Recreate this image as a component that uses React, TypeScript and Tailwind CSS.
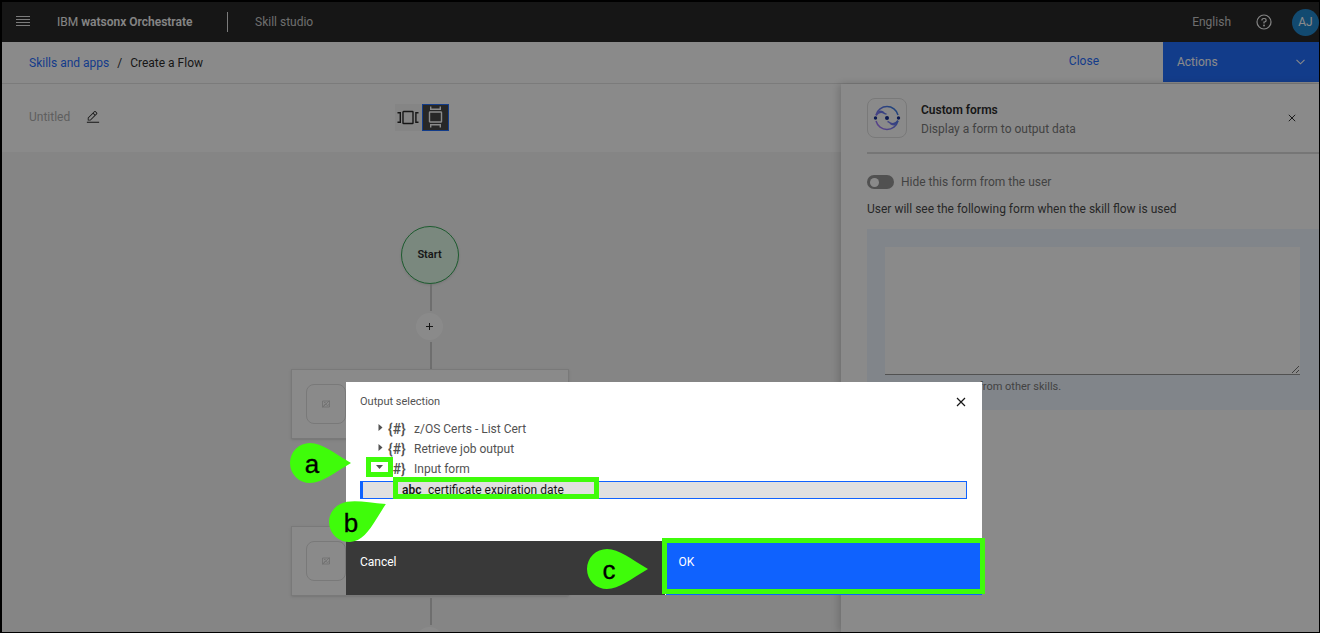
import React from "react";

function EditIcon() {
  return (
    <svg width="14" height="14" viewBox="0 0 32 32" fill="currentColor" aria-hidden="true">
      <path d="M2 27h28v2.4H2zM25.4 9c.8-.8.8-2 0-2.800l-3.600-3.600c-.8-.8-2-.8-2.800 0l-15 15V24h6.400zM20.400 4L24 7.600l-3 3L17.400 7zM6 22v-3.600l10-10 3.600 3.600-10 10z" />
    </svg>
  );
}

function CloseIcon({ size }: { size: number }) {
  return (
    <svg width={size} height={size} viewBox="0 0 10 10" fill="none" stroke="currentColor" strokeWidth="1.2" aria-hidden="true">
      <path d="M1 1l8 8M9 1L1 9" />
    </svg>
  );
}

function HorizontalIcon() {
  return (
    <svg width="22" height="15" viewBox="0 0 22 15" fill="none" stroke="currentColor" strokeWidth="1.4" aria-hidden="true">
      <rect x="6" y="1.500" width="10" height="12" rx=".6" />
      <path d="M.500 2.700h2.800v9.600H.500M21.500 2.700h-2.600v9.600h2.600" />
    </svg>
  );
}

function VerticalIcon() {
  return (
    <svg width="15" height="22" viewBox="0 0 15 22" fill="none" stroke="currentColor" strokeWidth="1.4" aria-hidden="true">
      <rect x="1.500" y="6" width="12" height="10" rx=".6" />
      <path d="M2.700 .500v2.800h9.600V.500M2.700 21.500v-2.800h9.600v2.800" />
    </svg>
  );
}

function SkillLogo() {
  return (
    <svg width="28" height="28" viewBox="0 0 28 28" fill="none" aria-hidden="true">
      <defs>
        <linearGradient id="ring" x1="4" y1="24" x2="24" y2="4" gradientUnits="userSpaceOnUse">
          <stop stopColor="#a56eff" />
          <stop offset="1" stopColor="#1f70e0" />
        </linearGradient>
      </defs>
      <g stroke="url(#ring)" strokeWidth="1.5">
        <path d="M3 11A11.400 11.400 0 0 1 25 11M3 17A11.400 11.400 0 0 0 25 17" />
        <path d="M3 11.500C5 8.500 7.500 8 9.500 8.500C11.500 9 11.500 10 13.500 10" />
        <path d="M25 16.500C23 19.500 20.500 20 18.500 19.500C16.500 19 16.500 18 14.500 17.500" />
        <path d="M4.500 8.800C6.500 7 9 7 11 8.800M23.500 19.200C21.500 21 19 21 17 19.200" />
      </g>
      <g fill="#001d8c">
        <circle cx="2.500" cy="14" r="1.700" />
        <circle cx="14" cy="14" r="2" />
        <circle cx="25.500" cy="14" r="1.700" />
      </g>
    </svg>
  );
}

function PlaceholderIcon() {
  return (
    <svg width="8" height="8" viewBox="0 0 8 8" fill="none" stroke="currentColor" strokeWidth=".8" aria-hidden="true">
      <path d="M.500 1h7v6h-7zM.500 7.500l7-7M2 2.500h1.500M1.500 5.500l2-1.500 2 1.500 1.500-1" />
    </svg>
  );
}

function Connector() {
  return <div className="ml-[2px] h-[27px] w-[2px] shrink-0 bg-[#c6c6c6]" />;
}

function AddStep() {
  return (
    <div className="flex shrink-0 flex-col items-center">
      <Connector />
      <button aria-label="Add step" className="my-[2px] flex size-[27px] shrink-0 items-center justify-center rounded-full bg-white text-[#161616]">
        <svg width="7" height="7" viewBox="0 0 7 7" stroke="currentColor" strokeWidth="1" aria-hidden="true">
          <path d="M3.500 0v7M0 3.500h7" />
        </svg>
      </button>
      <Connector />
    </div>
  );
}

function StepCard() {
  return (
    <div className="mb-[2px] h-[70px] w-[278px] shrink-0 border border-[#dcdcdc] bg-white p-[14px] shadow-sm">
      <div className="flex size-[40px] items-center justify-center rounded-lg border border-[#dcdcdc] text-[#c6c6c6]">
        <PlaceholderIcon />
      </div>
    </div>
  );
}

function TreeItem({ label, open = false }: { label: string; open?: boolean }) {
  return (
    <button aria-expanded={open} className="flex h-5 items-center pl-[17px] text-[#525252]">
      <svg width="7" height="7" viewBox="0 0 7 7" fill="currentColor" className="mb-[3px]" aria-hidden="true">
        <path d={open ? "M0 2h7L3.500 6z" : "M1.500 0v7l4-3.500z"} />
      </svg>
      <span className="ml-1 w-[26px] text-left text-[14px] font-semibold">{"{#}"}</span>
      <span>{label}</span>
    </button>
  );
}

function Callout({ letter, className, angle = 0 }: { letter: string; className: string; angle?: number }) {
  return (
    <div className={`absolute ${className}`}>
      <svg width="62" height="40" viewBox="0 0 62 40" overflow="visible" aria-hidden="true">
        <path
          d="M20 0C32 0 44 10 61 20C44 30 32 40 20 40A20 20 0 0 1 20 0Z"
          fill="#3ffc0a"
          transform={`rotate(${angle} 20 20)`}
        />
        <text x="22" y="30" textAnchor="middle" fontSize="26" fontFamily="Liberation Sans, Arial, sans-serif" fill="#000" stroke="#000" strokeWidth=".3">
          {letter}
        </text>
      </svg>
    </div>
  );
}

function OutputDialog() {
  return (
    <div role="dialog" aria-labelledby="dialog-title" className="absolute left-[344px] top-[380px] flex h-[213px] w-[636px] flex-col bg-white">
      <div className="flex h-[37px] items-center justify-between pl-[14px] pr-4 pt-[2px]">
        <h2 id="dialog-title" className="text-[11px] text-[#525252]">Output selection</h2>
        <button aria-label="Close dialog" className="text-[#161616]">
          <CloseIcon size={10} />
        </button>
      </div>
      <div className="flex flex-1 flex-col pl-[14px] pr-[15px]">
        <TreeItem label="z/OS Certs - List Cert" />
        <TreeItem label="Retrieve job output" />
        <TreeItem label="Input form" open />
        <button className="mt-[2px] flex h-[18px] items-center border border-l-[3px] border-[#0f62fe] bg-[#e0e0e0] pl-[39px] text-[#161616]">
          <span className="w-[26px] text-left font-semibold">abc</span>
          <span>certificate expiration date</span>
        </button>
      </div>
      <div className="flex h-[54px] gap-px text-white">
        <button className="flex flex-1 bg-[#393939] px-[14px] py-[13px] text-left">Cancel</button>
        <button className="flex flex-1 bg-[#0f62fe] px-[13px] py-[13px] text-left">OK</button>
      </div>
      <div className="absolute left-[20px] top-[75px] h-[20px] w-[27px] border-[5px] border-[#3ffc0a] bg-white">
        <svg width="7" height="7" viewBox="0 0 7 7" fill="#525252" className="ml-[5px] mt-[1px]" aria-hidden="true">
          <path d="M0 2h7L3.500 6z" />
        </svg>
      </div>
      <div className="absolute left-[47px] top-[95px] h-[22px] w-[206px] border-[5px] border-[#3ffc0a]" />
      <div className="absolute left-[316px] top-[156px] h-[56px] w-[323px] border-[5px] border-[#3ffc0a]" />
      <Callout letter="a" className="left-[-56px] top-[61px]" />
      <Callout letter="b" className="left-[-17px] top-[120px]" angle={-26} />
      <Callout letter="c" className="left-[241px] top-[167px]" />
    </div>
  );
}

export default function App() {
  return (
    <div className="h-screen overflow-hidden border-b border-l-2 border-r border-t-2 border-black bg-white font-['Roboto',sans-serif] text-[12px] leading-4 text-[#161616]">
      <div className="relative flex h-full flex-col overflow-hidden">
        <header className="flex h-[40px] shrink-0 items-center bg-[#161616] text-[#c6c6c6]">
          <button aria-label="Menu" className="mb-[2px] ml-[14px] flex w-[14px] flex-col gap-[2px]">
            <span className="h-px w-full bg-[#e0e0e0]" />
            <span className="h-px w-full bg-[#e0e0e0]" />
            <span className="h-px w-full bg-[#e0e0e0]" />
            <span className="h-px w-full bg-[#e0e0e0]" />
          </button>
          <span className="ml-[27px] w-[170px] text-[#f4f4f4]">
            IBM <b className="font-semibold">watsonx Orchestrate</b>
          </span>
          <span className="h-5 w-px bg-[#e0e0e0]" />
          <span className="ml-[27px]">Skill studio</span>
          <span className="ml-auto">English</span>
          <button aria-label="Help" className="ml-[25px] text-[#f4f4f4]">
            <svg width="16" height="16" viewBox="0 0 16 16" fill="none" stroke="currentColor" strokeWidth="1.200" aria-hidden="true">
              <circle cx="8" cy="8" r="7" />
              <path d="M5.900 6.500V6.200a1.700 1.700 0 0 1 1.700-1.700h.8a1.700 1.700 0 0 1 0 3.500H8v1.500" />
              <circle cx="8" cy="11.500" r=".4" />
            </svg>
          </button>
          <button className="ml-5 flex size-[27px] items-center justify-center rounded-full bg-[#0f7fcb] text-white">AJ</button>
        </header>

        <nav aria-label="Breadcrumb" className="flex h-[42px] shrink-0 border-b border-[#e0e0e0]">
          <div className="flex flex-1 items-center gap-2 pl-[27px]">
            <a href="#skills" className="text-[#0f62fe]">Skills and apps</a>
            <span>/</span>
            <span>Create a Flow</span>
          </div>
          <button className="mb-1 mr-[64px] text-[#0f62fe]">Close</button>
          <button className="flex h-[40px] w-[156px] items-center justify-between bg-[#0f62fe] pl-[14px] pr-[14px] text-white">
            Actions
            <svg width="9" height="6" viewBox="0 0 9 6" fill="none" stroke="currentColor" strokeWidth="1.100" aria-hidden="true">
              <path d="M.500 .800l4 4 4-4" />
            </svg>
          </button>
        </nav>

        <div className="flex min-h-0 flex-1">
          <main className="flex min-w-0 flex-1 flex-col">
            <div className="grid h-[68px] shrink-0 grid-cols-[1fr_auto_1fr] items-center bg-white pb-[2px]">
              <div className="flex items-center gap-4 pl-[27px] text-[#a8a8a8]">
                <span>Untitled</span>
                <button aria-label="Edit name" className="text-[#161616]">
                  <EditIcon />
                </button>
              </div>
              <div className="flex">
                <button aria-label="Horizontal layout" className="flex size-[27px] items-center justify-center bg-[#f4f4f4]">
                  <HorizontalIcon />
                </button>
                <button aria-label="Vertical layout" className="flex size-[27px] items-center justify-center border border-[#0f62fe] bg-[#393939] text-white">
                  <VerticalIcon />
                </button>
              </div>
            </div>
            <div className="flex flex-1 flex-col items-center overflow-hidden bg-[#f4f4f4] pl-4 pt-[74px]">
              <div className="flex size-[58px] shrink-0 items-center justify-center rounded-full border border-[#24a148] bg-[#defbe6] text-[11px] font-semibold shadow-sm">
                Start
              </div>
              <AddStep />
              <StepCard />
              <AddStep />
              <StepCard />
              <AddStep />
            </div>
          </main>

          <aside className="w-[478px] shrink-0 bg-white pl-[26px] shadow-[-2px_0_8px_rgba(0,0,0,0.2)]">
            <div className="flex h-[70px] items-center border-b-2 border-[#d6d6d6]">
              <div className="flex size-[40px] items-center justify-center rounded-lg border border-[#dcdcdc]">
                <SkillLogo />
              </div>
              <div className="ml-[14px] flex flex-col gap-[3px] pt-[2px]">
                <h2 className="font-semibold">Custom forms</h2>
                <p className="text-[#6f6f6f]">Display a form to output data</p>
              </div>
              <button aria-label="Close panel" className="ml-auto mr-[23px] text-[#161616]">
                <CloseIcon size={8} />
              </button>
            </div>
            <label className="mt-5 flex items-center gap-[7px] text-[#6f6f6f]">
              <input type="checkbox" className="peer sr-only" />
              <span className="flex h-[14px] w-[27px] items-center rounded-full bg-[#8d8d8d] pl-[3px]">
                <span className="size-[9px] rounded-full bg-white" />
              </span>
              Hide this form from the user
            </label>
            <label htmlFor="form-output" className="mt-[11px] block text-[#393939]">
              User will see the following form when the skill flow is used
            </label>
            <div className="mt-3 h-[181px] bg-[#edf5ff] pl-[18px] pr-[19px] pt-[18px]">
              <textarea id="form-output" className="block h-[128px] w-full resize-y border-b border-[#8d8d8d] bg-white outline-none" />
              <p className="mt-1 pl-[94px] text-[11px] text-[#6f6f6f]">from other skills.</p>
            </div>
          </aside>
        </div>

        <div className="absolute inset-0 bg-[#161616]/50" />
        <OutputDialog />
      </div>
    </div>
  );
}
